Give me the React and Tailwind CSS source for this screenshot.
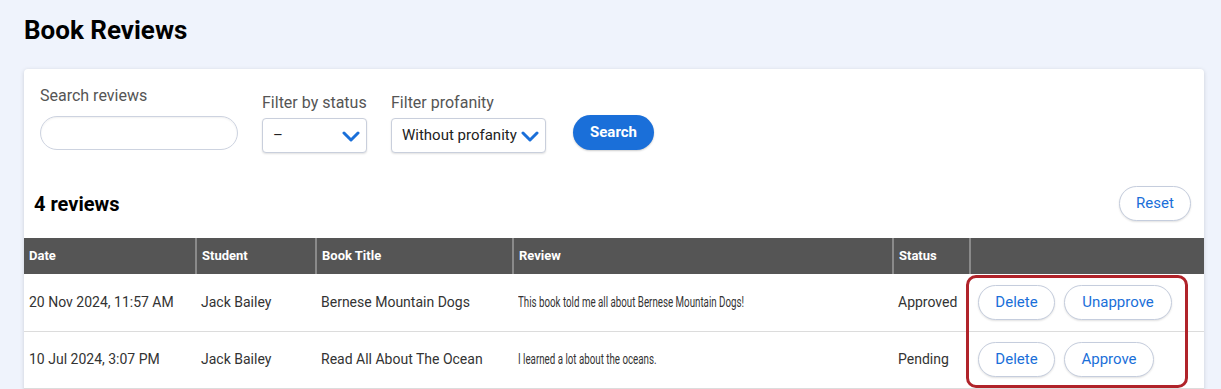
const reviews = [
  {
    date: '20 Nov 2024, 11:57 AM',
    student: 'Jack Bailey',
    title: 'Bernese Mountain Dogs',
    review: 'This book told me all about Bernese Mountain Dogs!',
    status: 'Approved',
  },
  {
    date: '10 Jul 2024, 3:07 PM',
    student: 'Jack Bailey',
    title: 'Read All About The Ocean',
    review: 'I learned a lot about the oceans.',
    status: 'Pending',
  },
];

function Chevron() {
  return (
    <svg className="w-[18px] h-[12px] shrink-0" viewBox="0 0 18 12" fill="none">
      <path d="M2 3l7 7 7-7" stroke="#1a6fd9" strokeWidth={3} strokeLinecap="round" strokeLinejoin="round" />
    </svg>
  );
}

function Select({ value, width }) {
  return (
    <div
      className={`${width} h-[35px] flex items-center justify-between pl-[10px] pr-[6px] bg-white border border-[#c9cfdc] rounded-[4px] shadow-[0_1px_2px_rgba(0,0,0,0.12)] text-[15px] text-[#222]`}
    >
      <span>{value}</span>
      <Chevron />
    </div>
  );
}

function PillButton({ children, className = '' }) {
  return (
    <button
      className={`h-[35px] rounded-full bg-white border border-[#c5cddd] shadow-[0_1px_2px_rgba(0,0,0,0.12)] text-[15px] text-[#1a6fd9] ${className}`}
    >
      {children}
    </button>
  );
}

export default function App() {
  return (
    <div className="min-h-[389px] bg-[#eff3fc] pl-[24px] pr-[17px] pt-[13px] font-['Roboto',sans-serif] overflow-hidden">
      <h1 className="text-[26px] leading-[34px] font-bold text-black">Book Reviews</h1>

      {/* Filter card */}
      <div className="mt-[22px] bg-white rounded-[4px] shadow-[0_1px_4px_rgba(0,0,0,0.15)] h-[340px]">
        <div className="flex items-start pl-[16px] pt-[16px]">
          <div className="w-[198px]">
            <div className="text-[16px] leading-[21px] text-[#555]">Search reviews</div>
            <div className="mt-[10px] h-[34px] rounded-full border border-[#cdd3e0] bg-white shadow-[inset_0_1px_2px_rgba(0,0,0,0.06)]" />
          </div>
          <div className="ml-[24px] mt-[7px]">
            <div className="text-[16px] leading-[21px] text-[#555]">Filter by status</div>
            <div className="mt-[5px]">
              <Select value="–" width="w-[105px]" />
            </div>
          </div>
          <div className="ml-[24px] mt-[7px]">
            <div className="text-[16px] leading-[21px] text-[#555]">Filter profanity</div>
            <div className="mt-[5px]">
              <Select value="Without profanity" width="w-[155px]" />
            </div>
          </div>
          <button className="ml-[27px] mt-[30px] w-[81px] h-[35px] rounded-full bg-[#1a6fd9] text-white text-[15px] font-bold shadow-[0_1px_2px_rgba(0,0,0,0.2)]">
            Search
          </button>
        </div>

        <div className="mt-[33px] flex items-center justify-between pl-[10px] pr-[13px]">
          <h2 className="text-[20px] font-bold text-black">4 reviews</h2>
          <PillButton className="w-[72px] h-[34px]">Reset</PillButton>
        </div>

        {/* Table */}
        <div className="relative mt-[17px]">
          <table className="w-full table-fixed border-collapse">
            <colgroup>
              <col className="w-[172px]" />
              <col className="w-[120px]" />
              <col className="w-[197px]" />
              <col className="w-[380px]" />
              <col className="w-[77px]" />
              <col />
            </colgroup>
            <thead>
              <tr className="h-[36px] bg-[#555555] text-white text-left text-[13px]">
                <th className="px-[5px] font-bold border-r-2 border-[#8a8a8a]">Date</th>
                <th className="px-[5px] font-bold border-r-2 border-[#8a8a8a]">Student</th>
                <th className="px-[5px] font-bold border-r-2 border-[#8a8a8a]">Book Title</th>
                <th className="px-[5px] font-bold border-r-2 border-[#8a8a8a]">Review</th>
                <th className="px-[5px] font-bold border-r-2 border-[#8a8a8a]">Status</th>
                <th />
              </tr>
            </thead>
            <tbody className="text-[#333] text-[14px]">
              {reviews.map((r) => (
                <tr key={r.date} className="h-[57px] border-b border-[#dcdcdc]">
                  <td className="px-[5px] whitespace-nowrap">{r.date}</td>
                  <td className="px-[5px]">{r.student}</td>
                  <td className="px-[5px] whitespace-nowrap">{r.title}</td>
                  <td className="px-[5px] whitespace-nowrap">
                    <span className="inline-block text-[15px] scale-x-[0.65] origin-left">{r.review}</span>
                  </td>
                  <td className="px-[5px]">{r.status}</td>
                  <td className="pl-[8px]">
                    <div className="flex gap-[9px]">
                      <PillButton className="w-[77px]">Delete</PillButton>
                      {r.status === 'Approved' ? (
                        <PillButton className="w-[108px]">Unapprove</PillButton>
                      ) : (
                        <PillButton className="w-[90px]">Approve</PillButton>
                      )}
                    </div>
                  </td>
                </tr>
              ))}
            </tbody>
          </table>
          {/* highlight annotation */}
          <div className="absolute left-[942px] top-[37px] w-[222px] h-[113px] border-[3px] border-[#b0232a] rounded-[10px] pointer-events-none" />
        </div>
      </div>
    </div>
  );
}
